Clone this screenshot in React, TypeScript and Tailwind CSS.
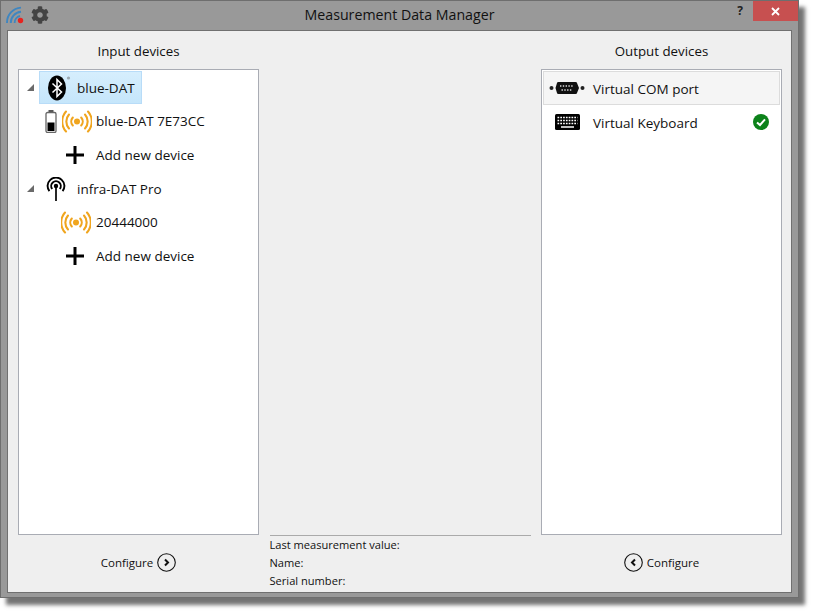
import { FaCog } from 'react-icons/fa'

const font = "font-['Open_Sans','Noto_Sans',sans-serif]"

function Expander() {
  return (
    <svg width="7" height="7" viewBox="0 0 7 7" className="shrink-0">
      <polygon points="7,0 7,7 0,7" fill="#6a6a6a" />
    </svg>
  )
}

function BluetoothIcon() {
  return (
    <svg width="24" height="26" viewBox="0 0 24 26">
      <ellipse cx="9" cy="13" rx="9" ry="12.5" fill="#000" />
      <path d="M4.5 8.5 L13.5 17 L9 21.5 V4.5 L13.5 9 L4.5 17.5" fill="none" stroke="#fff" strokeWidth="1.5" />
      <circle cx="20.5" cy="3" r="1.6" fill="#9aa7b0" />
    </svg>
  )
}

function BatteryIcon() {
  return (
    <svg width="12" height="23" viewBox="0 0 12 23">
      <rect x="3.5" y="0" width="5" height="3" fill="#555" />
      <rect x="1" y="2.5" width="10" height="20" rx="1.5" fill="#fff" stroke="#666" strokeWidth="1.3" />
      <rect x="2.5" y="12.5" width="7" height="8.5" fill="#000" />
    </svg>
  )
}

function SignalIcon() {
  return (
    <svg width="30" height="23" viewBox="0 0 30 23" fill="none" stroke="#f0a51e" strokeLinecap="round" strokeWidth="2.1">
      <circle cx="15" cy="11.5" r="3" fill="#f0a51e" stroke="none" />
      <path d="M10.8 7.5 A6 6 0 0 0 10.8 15.5" />
      <path d="M19.2 7.5 A6 6 0 0 1 19.2 15.5" />
      <path d="M7 4.5 A10.5 10.5 0 0 0 7 18.5" />
      <path d="M23 4.5 A10.5 10.5 0 0 1 23 18.5" />
      <path d="M4 1.5 A15 15 0 0 0 4 21.5" />
      <path d="M26 1.5 A15 15 0 0 1 26 21.5" />
    </svg>
  )
}

function AntennaIcon() {
  return (
    <svg width="20" height="24" viewBox="0 0 20 24" fill="none" stroke="#000" strokeWidth="1.9">
      <path d="M10 9 V24" strokeWidth="1.7" />
      <circle cx="10" cy="9" r="2.2" fill="#000" stroke="none" />
      <path d="M6.2 12 A4.8 4.8 0 1 1 13.8 12" />
      <path d="M3.4 14.2 A8.4 8.4 0 1 1 16.6 14.2" />
    </svg>
  )
}

function PlusIcon() {
  return (
    <svg width="18" height="18" viewBox="0 0 18 18">
      <rect x="7.5" y="0" width="3" height="18" fill="#000" />
      <rect x="0" y="7.5" width="18" height="3" fill="#000" />
    </svg>
  )
}

function ComPortIcon() {
  return (
    <svg width="36" height="12" viewBox="0 0 36 12">
      <circle cx="2.5" cy="6" r="2" fill="#222" />
      <circle cx="33.5" cy="6" r="2" fill="#222" />
      <path d="M8 1 Q8 0 9.5 0 H26.5 Q28 0 28 1 L30 6 L28 11 Q28 12 26.5 12 H9.5 Q8 12 8 11 L6.5 6 Z" fill="#111" />
      <path d="M11 4 H25 M12.5 8 H23.5" stroke="#ddd" strokeWidth="1.3" strokeDasharray="1.4 1.4" />
    </svg>
  )
}

function KeyboardIcon() {
  return (
    <svg width="25" height="16" viewBox="0 0 25 16">
      <rect width="25" height="16" rx="1.5" fill="#000" />
      <path d="M2.5 3.5 H22.5 M2.5 6.5 H22.5 M2.5 9.5 H22.5" stroke="#fff" strokeWidth="1.4" strokeDasharray="1.7 1.1" />
      <path d="M6 13 H19" stroke="#fff" strokeWidth="1.5" />
    </svg>
  )
}

function CheckIcon() {
  return (
    <svg width="16" height="16" viewBox="0 0 16 16">
      <circle cx="8" cy="8" r="8" fill="#0c821a" />
      <path d="M4 8.4 L7 11 L12 5.4" fill="none" stroke="#fff" strokeWidth="2" />
    </svg>
  )
}

function LogoIcon() {
  return (
    <svg width="18" height="18" viewBox="0 0 18 18" fill="none" stroke="#3f86c0" strokeWidth="1.9">
      <path d="M1 17 A15 15 0 0 1 15 1.6" />
      <path d="M4.8 17 A11 11 0 0 1 15 5.8" />
      <path d="M8.6 17 A7 7 0 0 1 14 10" />
      <circle cx="14.5" cy="14.5" r="2.7" fill="#e8231f" stroke="none" />
    </svg>
  )
}

function CircleChevron({ dir }: { dir: 'left' | 'right' }) {
  return (
    <svg width="19" height="19" viewBox="0 0 19 19" fill="none" stroke="#111">
      <circle cx="9.5" cy="9.5" r="8.8" strokeWidth="1.1" />
      <path d={dir === 'right' ? 'M8 6.5 L11 9.5 L8 12.5' : 'M11 6.5 L8 9.5 L11 12.5'} strokeWidth="2" />
    </svg>
  )
}

function TreeRow({ children, label, pl, gap }: { children: React.ReactNode; label: string; pl: string; gap: string }) {
  return (
    <div className={`flex h-[33.7px] items-center ${pl} ${gap}`}>
      {children}
      <span className="pb-[1px]">{label}</span>
    </div>
  )
}

export default function App() {
  return (
    <div className={`h-[615px] w-[815px] overflow-hidden bg-white ${font} text-[13.5px] text-[#111]`}>
      <div className="flex h-[598px] w-[799px] flex-col border border-[#6e6e6e] bg-[#999999] shadow-[6px_7px_4px_rgba(0,0,0,0.55)]">

        {/* Title bar */}
        <div className="grid h-[29px] shrink-0 grid-cols-[1fr_auto_1fr]">
          <div className="flex items-start gap-[7px] pl-[5px] pt-[5px]">
            <LogoIcon />
            <FaCog size={18} color="#444" />
          </div>
          <div className="pt-[5px] text-[14.2px] leading-[18px]">Measurement Data Manager</div>
          <div className="flex items-start justify-end">
            <span className="mr-[10px] pt-[1px] text-[12px] font-bold leading-[18px] text-[#222]">?</span>
            <div className="flex h-[20px] w-[45px] items-center justify-center bg-[#c75050]">
              <svg width="9" height="9" viewBox="0 0 9 9">
                <path d="M1 1 L8 8 M8 1 L1 8" stroke="#fff" strokeWidth="1.8" />
              </svg>
            </div>
          </div>
        </div>

        {/* Main panel */}
        <div className="mx-[6px] mb-[4px] grid flex-1 grid-cols-[241px_261px_241px] grid-rows-[38px_466px_1fr] gap-x-[10.5px] border border-[#707070] bg-[#efefef] pl-[10px]">
          <div className="flex items-center justify-center pt-[3px] text-[13.3px]">Input devices</div>
          <div />
          <div className="flex items-center justify-center pt-[3px] text-[13.3px]">Output devices</div>

          {/* Input tree */}
          <div className="border border-[#a9acb4] bg-white pt-[1px]">
            <div className="flex h-[33.7px] items-center pl-[8px]">
              <Expander />
              <div className="ml-[5px] flex h-[33px] w-[103px] items-center gap-[5px] border border-[#b8dcf8] bg-gradient-to-b from-[#d6eefd] to-[#c5e6fb] pl-[8px]">
                <BluetoothIcon />
                <span className="pt-[1px]">blue-DAT</span>
              </div>
            </div>
            <TreeRow label="blue-DAT 7E73CC" pl="pl-[26px]" gap="gap-[4.5px]">
              <BatteryIcon />
              <SignalIcon />
            </TreeRow>
            <TreeRow label="Add new device" pl="pl-[47px]" gap="gap-[12px]">
              <PlusIcon />
            </TreeRow>
            <div className="flex h-[33.7px] items-center pl-[8px]">
              <Expander />
              <div className="ml-[12px] flex items-center gap-[11px]">
                <AntennaIcon />
                <span className="pt-[1px]">infra-DAT Pro</span>
              </div>
            </div>
            <TreeRow label="20444000" pl="pl-[42px]" gap="gap-[5px]">
              <SignalIcon />
            </TreeRow>
            <TreeRow label="Add new device" pl="pl-[47px]" gap="gap-[12px]">
              <PlusIcon />
            </TreeRow>
          </div>

          <div />

          {/* Output list */}
          <div className="border border-[#a9acb4] bg-white p-[1px]">
            <div className="flex h-[34px] items-center border border-[#dcdcdc] bg-[#f5f5f5] pl-[5px]">
              <ComPortIcon />
              <span className="ml-[8px] pt-[2px]">Virtual COM port</span>
            </div>
            <div className="flex h-[34px] items-center pl-[12px] pr-[11.5px]">
              <KeyboardIcon />
              <span className="ml-[13px] flex-1 pt-[2px]">Virtual Keyboard</span>
              <CheckIcon />
            </div>
          </div>

          {/* Footer */}
          <div className="flex items-center justify-center gap-[4px] pb-[2px] text-[11.5px]">
            <span>Configure</span>
            <CircleChevron dir="right" />
          </div>
          <div className="border-t border-[#aaaaaa] text-[11.1px] leading-[18px]">
            <div>Last measurement value:</div>
            <div>Name:</div>
            <div>Serial number:</div>
          </div>
          <div className="flex items-center justify-center gap-[4px] pb-[2px] text-[11.5px]">
            <CircleChevron dir="left" />
            <span>Configure</span>
          </div>
        </div>
      </div>
    </div>
  )
}
